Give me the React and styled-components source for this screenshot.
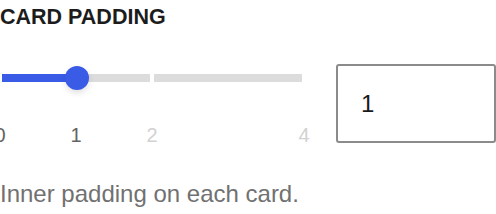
import React from 'react';
import styled, { createGlobalStyle } from 'styled-components';

const GlobalStyle = createGlobalStyle`
  body {
    margin: 0;
    background: #ffffff;
    font-family: "Liberation Sans", Arial, sans-serif;
  }
`;

const Wrapper = styled.div`
  width: 496px;
  height: 214px;
  padding-top: 5px;
  box-sizing: border-box;
  overflow: hidden;
`;

const Title = styled.div`
  font-size: 21.5px;
  line-height: 24px;
  font-weight: 700;
  color: #1c1c1c;
`;

const Row = styled.div`
  display: flex;
  justify-content: space-between;
  align-items: flex-start;
  margin-top: 35px;
`;

const SliderColumn = styled.div`
  width: 306px;
`;

const SliderArea = styled.div`
  position: relative;
  height: 28px;
`;

const Track = styled.div`
  display: flex;
  gap: 4px;
  padding: 10px 4px 0 2px;
`;

const Segment = styled.div`
  flex: 1;
  height: 8px;
  background: #dcdcdc;
`;

const Fill = styled.div`
  position: absolute;
  left: 2px;
  top: 10px;
  height: 8px;
  background: #3a5be6;
`;

const Thumb = styled.div`
  position: absolute;
  top: 2px;
  width: 24px;
  height: 24px;
  margin-left: -12px;
  border-radius: 50%;
  background: #3a5be6;
  box-shadow: 0 3px 6px rgba(0, 0, 0, 0.12);
`;

const Marks = styled.div`
  position: relative;
  height: 24px;
  margin-top: 31px;
`;

const Mark = styled.span`
  position: absolute;
  top: 0;
  transform: translateX(-50%);
  font-size: 20px;
  line-height: 24px;
  color: ${p => (p.$active ? '#636363' : '#d2d2d2')};
`;

const NumberBox = styled.div`
  width: 160px;
  height: 79px;
  box-sizing: border-box;
  border: 2px solid #8b8b8b;
  border-radius: 3px;
  display: flex;
  align-items: center;
  padding-left: 23px;
  font-size: 24px;
  color: #1a1a1a;
`;

const Description = styled.div`
  margin-top: 33px;
  font-size: 24px;
  line-height: 28px;
  color: #717171;
`;

const marks = [0, 1, 2, 4];
const step = 76;

const App = () => {
  const value = 1;
  const thumbX = value * step + 1;
  return (
    <Wrapper>
      <GlobalStyle />
      <Title>CARD PADDING</Title>
      <Row>
        <SliderColumn>
          <SliderArea>
            <Track>
              <Segment />
              <Segment />
            </Track>
            <Fill style={{ width: thumbX - 2 }} />
            <Thumb style={{ left: thumbX }} />
          </SliderArea>
          <Marks>
            {marks.map(m => (
              <Mark key={m} $active={m <= value} style={{ left: m * step }}>
                {m}
              </Mark>
            ))}
          </Marks>
        </SliderColumn>
        <NumberBox>{value}</NumberBox>
      </Row>
      <Description>Inner padding on each card.</Description>
    </Wrapper>
  );
};

export default App;
